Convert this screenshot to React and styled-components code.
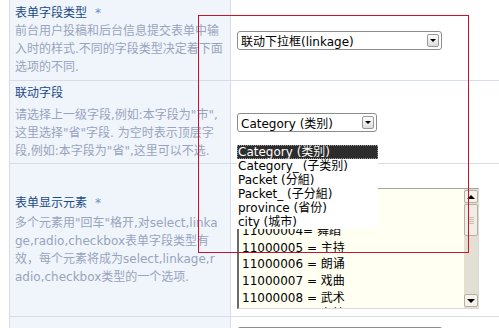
import styled, { createGlobalStyle } from "styled-components";

// Global reset and base font
const GlobalStyle = createGlobalStyle`
  * {
    box-sizing: border-box;
    margin: 0;
    padding: 0;
  }
  body {
    background: #ffffff;
    font-family: "DejaVu Sans", "Noto Sans CJK SC", sans-serif;
    color: #000;
  }
`;

// Form rows shown on the left side
const fields = [
  {
    title: "表单字段类型",
    required: true,
    height: 81,
    gap: 0,
    lines: [
      "前台用户投稿和后台信息提交表单中输",
      "入时的样式.不同的字段类型决定着下面",
      "选项的不同.",
    ],
  },
  {
    title: "联动字段",
    required: false,
    height: 83,
    gap: 4,
    lines: [
      "请选择上一级字段,例如:本字段为\"市\",",
      "这里选择\"省\"字段. 为空时表示顶层字",
      "段,例如:本字段为\"省\",这里可以不选.",
    ],
  },
  {
    title: "表单显示元素",
    required: true,
    height: 153,
    gap: 2,
    lines: [
      "多个元素用\"回车\"格开,对select,linka",
      "ge,radio,checkbox表单字段类型有",
      "效，每个元素将成为select,linkage,r",
      "adio,checkbox类型的一个选项.",
    ],
  },
];

const options = [
  "Category (类别)",
  "Category_ (子类别)",
  "Packet (分組)",
  "Packet_ (子分組)",
  "province (省份)",
  "city (城市)",
];

const elements = [
  "11000002 = 声乐",
  "11000003 = 器乐",
  "11000004= 舞蹈",
  "11000005 = 主持",
  "11000006 = 朗诵",
  "11000007 = 戏曲",
  "11000008 = 武术",
  "11000009 = 杂技",
];

const App = () => {
  return (
    <>
      <GlobalStyle />
      <Page>
        <Table>
          {/* field type */}
          <Row $h={fields[0].height}>
            <Label field={fields[0]} />
            <ValueCell $align="center">
              <Select $w={205}>
                <span>联动下拉框(linkage)</span>
                <ArrowButton />
              </Select>
            </ValueCell>
          </Row>

          {/* linked field */}
          <Row $h={fields[1].height}>
            <Label field={fields[1]} />
            <ValueCell $align="center">
              <Select $w={140}>
                <span>Category (类别)</span>
                <ArrowButton />
              </Select>
            </ValueCell>
          </Row>

          {/* form elements */}
          <Row $h={fields[2].height}>
            <Label field={fields[2]} />
            <ValueCell $align="flex-end" $pb={7}>
              <TextBox>
                <TextContent>
                  {elements.map((line) => (
                    <TextLine key={line}>{line}</TextLine>
                  ))}
                </TextContent>
                <ScrollBar>
                  <ScrollButton>
                    <UpTriangle />
                  </ScrollButton>
                  <Thumb>
                    <Grip />
                    <Grip />
                    <Grip />
                    <Grip />
                  </Thumb>
                  <Track />
                  <ScrollButton>
                    <DownTriangle />
                  </ScrollButton>
                </ScrollBar>
              </TextBox>
            </ValueCell>
          </Row>

          {/* next row, mostly cut off */}
          <Row $h={40}>
            <LabelCell />
            <ValueCell $align="flex-start" $pt={10}>
              <Select $w={206} />
            </ValueCell>
          </Row>
        </Table>

        {/* open dropdown of the linked field select */}
        <DropList>
          {options.map((opt, i) => (
            <Option key={opt} $active={i === 0}>
              {opt}
            </Option>
          ))}
        </DropList>

        {/* red annotation frame */}
        <Marker />
      </Page>
    </>
  );
};

export default App;

// Left cell with title and description lines
const Label = ({ field }) => {
  return (
    <LabelCell>
      <Title $gap={field.gap}>
        {field.title}
        {field.required && <Star>*</Star>}
      </Title>
      {field.lines.map((line) => (
        <Desc key={line}>{line}</Desc>
      ))}
    </LabelCell>
  );
};

// Styled Components
const Page = styled.div`
  position: relative;
  width: 499px;
  height: 328px;
  overflow: hidden;
`;

const Table = styled.div`
  margin-left: 9px;
  width: 490px;
  border-left: 1px solid #d6dde8;
`;

const Row = styled.div`
  display: grid;
  grid-template-columns: 221px 1fr;
  height: ${(p) => p.$h}px;
  border-bottom: 1px solid #d6dde8;
`;

const LabelCell = styled.div`
  display: flex;
  flex-direction: column;
  justify-content: center;
  padding: 0 5px;
  background: #f0f4fb;
  border-right: 1px solid #d6dde8;
`;

const Title = styled.div`
  font-size: 12px;
  line-height: 18px;
  color: #1b4b87;
  margin-bottom: ${(p) => p.$gap}px;
  white-space: nowrap;
`;

const Star = styled.span`
  color: #6d8fc6;
  margin-left: 8px;
`;

const Desc = styled.div`
  font-size: 12px;
  line-height: 18px;
  color: #98a4bd;
  white-space: nowrap;
`;

const ValueCell = styled.div`
  display: flex;
  align-items: ${(p) => p.$align};
  padding: ${(p) => p.$pt || 0}px 0 ${(p) => p.$pb || 0}px 6px;
`;

const Select = styled.div`
  width: ${(p) => p.$w}px;
  height: 19px;
  display: flex;
  align-items: center;
  justify-content: space-between;
  padding: 0 2px 0 3px;
  border: 1px solid #8c8c8c;
  border-radius: 3px;
  background: #ffffff;
  font-size: 12px;
  white-space: nowrap;
`;

const ArrowButton = styled.div`
  width: 12px;
  height: 13px;
  display: flex;
  align-items: center;
  justify-content: center;
  border: 1px solid #999999;
  border-radius: 2px;
  background: linear-gradient(#ffffff, #dcdcdc);

  &::after {
    content: "";
    border-left: 3px solid transparent;
    border-right: 3px solid transparent;
    border-top: 3px solid #000;
  }
`;

const TextBox = styled.div`
  width: 242px;
  height: 121px;
  display: flex;
  background: #fffff2;
  border-top: 1px solid #a5a5a5;
  border-left: 2px solid #6b6b6b;
  border-bottom: 1px solid #d9d9d9;
  border-right: 1px solid #d9d9d9;
`;

const TextContent = styled.div`
  flex: 1;
  padding: 1px 3px;
  overflow: hidden;
`;

const TextLine = styled.div`
  font-size: 12px;
  line-height: 16.6px;
  white-space: nowrap;
`;

const ScrollBar = styled.div`
  width: 14px;
  display: flex;
  flex-direction: column;
  padding: 1px 0;
  background: #e2dfd3;
`;

const ScrollButton = styled.div`
  height: 13px;
  display: flex;
  align-items: center;
  justify-content: center;
  border: 1px solid #b7b1a0;
  border-radius: 2px;
  background: #f4f2eb;
`;

const UpTriangle = styled.div`
  border-left: 4px solid transparent;
  border-right: 4px solid transparent;
  border-bottom: 4px solid #000;
`;

const DownTriangle = styled.div`
  border-left: 4px solid transparent;
  border-right: 4px solid transparent;
  border-top: 4px solid #000;
`;

const Thumb = styled.div`
  height: 32px;
  margin-top: 1px;
  display: flex;
  flex-direction: column;
  align-items: center;
  justify-content: center;
  gap: 1px;
  border: 1px solid #b7b1a0;
  border-radius: 2px;
  background: #efede6;
`;

const Grip = styled.div`
  width: 6px;
  height: 1px;
  background: #c6c0ae;
`;

const Track = styled.div`
  flex: 1;
`;

const DropList = styled.div`
  position: absolute;
  left: 237px;
  top: 145px;
  width: 141px;
  background: #ffffff;
`;

const Option = styled.div`
  height: 14px;
  line-height: 14px;
  padding-left: 1px;
  font-size: 12px;
  white-space: nowrap;
  color: ${(p) => (p.$active ? "#ffffff" : "#000000")};
  background: ${(p) => (p.$active ? "#2c2c2c" : "transparent")};
  outline: ${(p) => (p.$active ? "1px dotted #9a9a9a" : "none")};
  outline-offset: -1px;
`;

const Marker = styled.div`
  position: absolute;
  left: 198px;
  top: 15px;
  width: 271px;
  height: 238px;
  border: 1px solid #c4122f;
  pointer-events: none;
`;
